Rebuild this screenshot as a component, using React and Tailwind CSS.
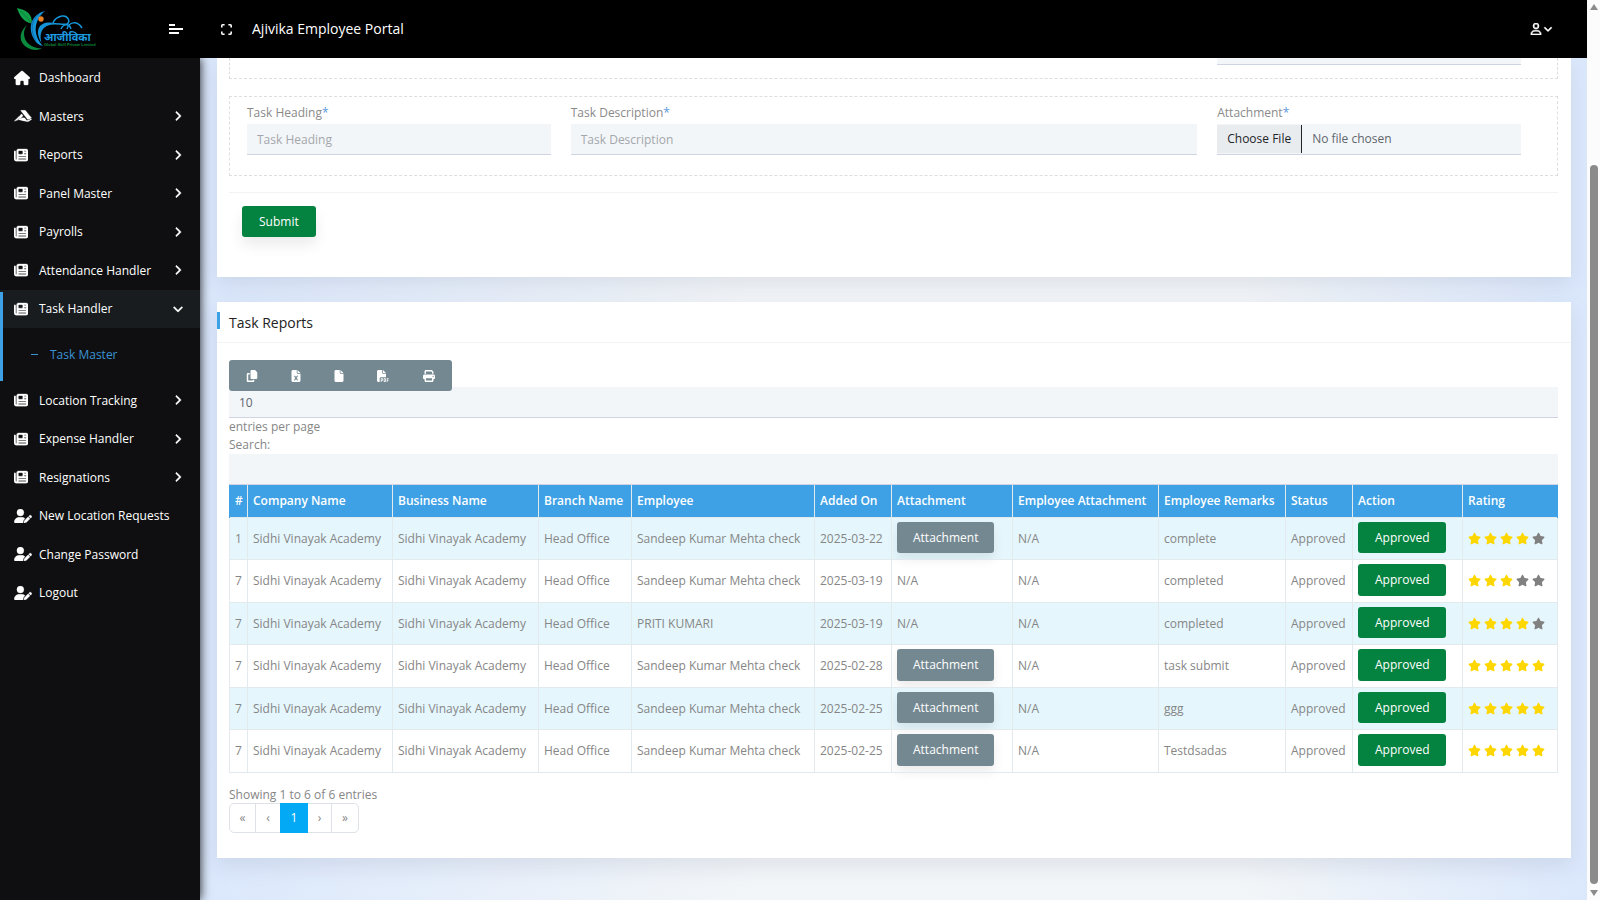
import React from "react";
import {
  FaHouse, FaNewspaper, FaUserPen, FaAngleRight, FaAngleDown, FaRegUser,
  FaCopy, FaFileExcel, FaFile, FaFilePdf, FaPrint, FaStar, FaAccusoft,
} from "react-icons/fa6";

const MENU = [
  { label: "Dashboard", icon: FaHouse, size: "h-4 w-4" },
  { label: "Masters", icon: FaAccusoft, size: "h-3.5 w-[18px]", more: true },
  { label: "Reports", icon: FaNewspaper, size: "size-3.5", more: true },
  { label: "Panel Master", icon: FaNewspaper, size: "size-3.5", more: true },
  { label: "Payrolls", icon: FaNewspaper, size: "size-3.5", more: true },
  { label: "Attendance Handler", icon: FaNewspaper, size: "size-3.5", more: true },
  { label: "Task Handler", icon: FaNewspaper, size: "size-3.5", more: true, open: true, children: ["Task Master"] },
  { label: "Location Tracking", icon: FaNewspaper, size: "size-3.5", more: true },
  { label: "Expense Handler", icon: FaNewspaper, size: "size-3.5", more: true },
  { label: "Resignations", icon: FaNewspaper, size: "size-3.5", more: true },
  { label: "New Location Requests", icon: FaUserPen, size: "h-3.5 w-[18px]" },
  { label: "Change Password", icon: FaUserPen, size: "h-3.5 w-[18px]" },
  { label: "Logout", icon: FaUserPen, size: "h-3.5 w-[18px]" },
];

const ROWS = [
  { n: 1, who: "Sandeep Kumar Mehta check", date: "2025-03-22", file: true, note: "complete", stars: 4 },
  { n: 7, who: "Sandeep Kumar Mehta check", date: "2025-03-19", file: false, note: "completed", stars: 3 },
  { n: 7, who: "PRITI KUMARI", date: "2025-03-19", file: false, note: "completed", stars: 4 },
  { n: 7, who: "Sandeep Kumar Mehta check", date: "2025-02-28", file: true, note: "task submit", stars: 5 },
  { n: 7, who: "Sandeep Kumar Mehta check", date: "2025-02-25", file: true, note: "ggg", stars: 5 },
  { n: 7, who: "Sandeep Kumar Mehta check", date: "2025-02-25", file: true, note: "Testdsadas", stars: 5 },
];

const COLUMNS = [
  ["#", "w-[18px]"],
  ["Company Name", "w-[145px]"],
  ["Business Name", "w-[146px]"],
  ["Branch Name", "w-[93px]"],
  ["Employee", "w-[183px]"],
  ["Added On", "w-[77px]"],
  ["Attachment", "w-[121px]"],
  ["Employee Attachment", "w-[146px]"],
  ["Employee Remarks", "w-[127px]"],
  ["Status", "w-[67px]"],
  ["Action", "w-[110px]"],
  ["Rating", "w-[95px]"],
];

const EXPORTS = [
  ["Copy", FaCopy, "w-[45px]"],
  ["Excel", FaFileExcel, "w-[43px]"],
  ["CSV", FaFile, "w-[43px]"],
  ["PDF", FaFilePdf, "w-[45px]"],
  ["Print", FaPrint, "w-[47px]"],
];

const FIELD = "block h-[31px] w-full border-b border-[#cfd3e2] bg-[#f3f6f9] px-2.5 text-xs text-[#5f666d] outline-none placeholder:text-[#a3a7ab]";

function Logo() {
  return (
    <svg viewBox="0 0 80 44" className="h-11 w-20" role="img" aria-label="Ajivika">
      <path d="M0 1C10 3 16 8 14.500 16.500C7 15 3 10 0 1Z" fill="#12a14b" />
      <path d="M3 4C7 7 11 11 13.500 15.500" stroke="#0b6d33" strokeWidth="0.7" fill="none" />
      <path d="M10 18C1 26 2 36 11 41C15 43.500 21 43.500 25 41.500C17 41 11 38 8.500 33C6 27 7 22 10 18Z" fill="#0b8a3e" />
      <path d="M28 4C15 7 10 20 17 32C19 36 22 38.500 26 39C17 30 15 15 28 4Z" fill="#1594d8" />
      <path d="M22 7C14 13 13 24 19 34" stroke="#0d6fb0" strokeWidth="1" fill="none" />
      <path d="M38 16C24 13 16 21 24.500 36C22 25 25 19 38 16Z" fill="#1594d8" />
      <circle cx="24" cy="12" r="2.7" fill="#e98127" />
      <path d="M30 18C37 15 44 18 50 17C54 15 51 8 45 9C40 10 37 13 36 16M50 22C52 15 60 13 65 21M44 22C46 17 52 16 54 22" stroke="#1594d8" strokeWidth="1.500" fill="none" />
      <text x="27" y="34" fill="#1c9be0" className="text-[11px] font-bold [font-family:'Noto_Sans_Devanagari','Noto_Sans',sans-serif]">आजीविका</text>
      <text x="27" y="39" fill="#0b8a3e" className="text-[4px] font-bold [font-family:'Liberation_Sans',sans-serif]">Global Skill Private Limited</text>
    </svg>
  );
}

function MenuItem({ item }) {
  const Icon = item.icon;
  return (
    <li className={item.open ? "relative" : ""}>
      {item.open && <span className="absolute top-0.5 bottom-0 left-0 w-[3px] bg-[#3ea1e5]" />}
      <a href="#" className={`flex items-center py-[9px] pr-4 pl-3.5 leading-relaxed text-white ${item.open ? "bg-[#181c1f]" : ""}`}>
        <span className="w-[25px] shrink-0"><Icon className={`stroke-current [stroke-width:10px] ${item.size}`} /></span>
        <span className="flex-1 whitespace-nowrap">{item.label}</span>
        {item.more && (item.open
          ? <FaAngleDown className="size-3 stroke-current [stroke-width:16px]" />
          : <FaAngleRight className="size-3 stroke-current [stroke-width:16px]" />)}
      </a>
      {item.children && (
        <ul className="pt-[18px] pb-[17px]">
          {item.children.map((c) => (
            <li key={c}>
              <a href="#" className="flex items-center pl-[31px] leading-[18px] text-[#3b93d3]">
                <span className="mr-3 h-px w-[7px] bg-[#3b93d3]" />
                {c}
              </a>
            </li>
          ))}
        </ul>
      )}
    </li>
  );
}

function Label({ id, children }) {
  return (
    <label htmlFor={id} className="mb-[3px] block leading-4 text-[#8a8a8a]">
      {children}<span className="text-[#5b9bdc]">*</span>
    </label>
  );
}

export default function App() {
  return (
    <div className="flex min-h-screen bg-white text-xs text-[#868686] [font-family:'Open_Sans',sans-serif]">
      <div className="flex min-w-0 flex-1 flex-col">
        <header className="z-20 flex h-[58px] items-center bg-black text-white">
          <a href="#" className="ml-[17px]"><Logo /></a>
          <button type="button" aria-label="Toggle menu" className="ml-[72px]">
            <svg viewBox="0 0 14 10" className="h-2.5 w-3.5" fill="none" stroke="currentColor" strokeWidth="2"><path d="M0 1H6M0 5H14M0 9H10" /></svg>
          </button>
          <button type="button" aria-label="Full screen" className="ml-[38px]">
            <svg viewBox="0 0 11 11" className="size-[11px]" fill="none" stroke="currentColor" strokeWidth="1.600"><path d="M0.8 3.6V1.7Q0.8 0.8 1.7 0.8H3.6M7.4 0.8H9.3Q10.2 0.8 10.2 1.7V3.6M10.2 7.4V9.3Q10.2 10.2 9.3 10.2H7.4M3.6 10.2H1.7Q0.8 10.2 0.8 9.3V7.4" /></svg>
          </button>
          <h1 className="ml-5 flex-1 text-sm font-medium">Ajivika Employee Portal</h1>
          <button type="button" aria-label="Account" className="mr-[34px] flex items-center gap-px">
            <FaRegUser className="size-3 stroke-current [stroke-width:24px]" />
            <FaAngleDown className="size-2.5 stroke-current [stroke-width:24px]" />
          </button>
        </header>

        <div className="flex flex-1">
          <nav className="z-10 w-[200px] shrink-0 bg-[#0f0f11] shadow-[0_0_10px_rgba(0,0,0,0.9)]">
            <ul className="flex flex-col gap-px pt-px">
              {MENU.map((m) => <MenuItem key={m.label} item={m} />)}
            </ul>
          </nav>

          <main className="flex min-w-0 flex-1 flex-col gap-[25px] bg-[linear-gradient(to_right,#dbe8fc,#f3f6f8_40%,#f3f6f8_75%,#dbe8fc)] pr-4 pb-[42px] pl-[17px]">
            <section className="bg-white pr-[13px] pb-10 pl-3 shadow-[0_8px_20px_rgba(100,110,140,0.15)]">
              <form>
                <div className="mb-[17px] flex h-[21px] justify-end border border-t-0 border-dashed border-[#dedede] pr-9">
                  <div className="h-[7px] w-[304px] border-b border-[#cfd3e2] bg-[#f3f6f9]" />
                </div>
                <div className="grid grid-cols-[304fr_627fr_304fr] gap-5 border border-dashed border-[#dedede] pt-2 pr-9 pb-5 pl-[17px]">
                  <div>
                    <Label id="heading">Task Heading</Label>
                    <input id="heading" placeholder="Task Heading" className={FIELD} />
                  </div>
                  <div>
                    <Label id="description">Task Description</Label>
                    <input id="description" placeholder="Task Description" className={FIELD} />
                  </div>
                  <div>
                    <Label id="attachment">Attachment</Label>
                    <input
                      id="attachment"
                      type="file"
                      className="block h-[31px] w-full border-b border-[#cfd3e2] bg-[#f3f6f9] py-px text-xs text-[#5f666d] file:mr-2.5 file:h-7 file:border-r file:border-[#212529] file:bg-[#e9ecef] file:px-2.5 file:text-xs file:text-[#212529]"
                    />
                  </div>
                </div>
                <hr className="mt-4 mb-[13px] border-[#f3f3f3]" />
                <button type="submit" className="ml-[13px] h-[31px] rounded-[3px] bg-[#04823f] px-[17px] text-white shadow-[0_8px_14px_rgba(0,0,0,0.08)]">Submit</button>
              </form>
            </section>

            <section className="bg-white pb-[25px] shadow-[0_8px_20px_rgba(100,110,140,0.15)]">
              <div className="flex h-[41px] items-center border-b border-[#f1f3f5]">
                <span className="-mt-1 h-[17px] w-[3px] bg-[#3ea1e5]" />
                <h2 className="ml-[9px] pt-px text-sm text-[#212121]">Task Reports</h2>
              </div>
              <div className="pt-[17px] pr-[13px] pl-3">
                <div className="relative z-10 inline-flex h-[31px] rounded-[3px] bg-[#748891] align-top text-white">
                  {EXPORTS.map(([name, Icon, w]) => (
                    <button key={name} type="button" aria-label={name} className={`flex items-center justify-center ${w}`}>
                      <Icon className="size-3" />
                    </button>
                  ))}
                </div>
                <select id="perpage" defaultValue="10" className={`${FIELD} -mt-1 appearance-none pt-0.5`}>
                  <option>10</option>
                </select>
                <label htmlFor="perpage" className="block leading-[18px]">entries per page</label>
                <label htmlFor="search" className="block leading-[18px]">Search:</label>
                <input id="search" type="search" className={FIELD} />

                <table className="w-full table-fixed border-collapse leading-relaxed">
                  <colgroup>{COLUMNS.map(([name, w]) => <col key={name} className={w} />)}</colgroup>
                  <thead>
                    <tr className="h-8 bg-[#3ea1e5] text-white">
                      {COLUMNS.map(([name]) => (
                        <th key={name} className="border-x border-[#e3eaee] pl-[5px] text-left font-semibold whitespace-nowrap first:border-l-[#3ea1e5] last:border-r-[#3ea1e5]">{name}</th>
                      ))}
                    </tr>
                  </thead>
                  <tbody className="[&_td]:border [&_td]:border-[#e3eaee] [&_td]:pl-[5px] [&_td]:whitespace-nowrap">
                    {ROWS.map((r, i) => (
                      <tr key={i} className="odd:bg-[#e5f6fd]">
                        <td>{r.n}</td>
                        <td>Sidhi Vinayak Academy</td>
                        <td>Sidhi Vinayak Academy</td>
                        <td>Head Office</td>
                        <td>{r.who}</td>
                        <td>{r.date}</td>
                        <td className={r.file ? "pt-1 pb-1.5" : ""}>
                          {r.file ? (
                            <button type="button" className="block rounded-[3px] bg-[#748891] px-4 py-1.5 text-white shadow-[0_6px_12px_rgba(0,0,0,0.08)]">Attachment</button>
                          ) : "N/A"}
                        </td>
                        <td>N/A</td>
                        <td>{r.note}</td>
                        <td>Approved</td>
                        <td className="pt-1 pb-1.5">
                          <button type="button" className="block rounded-[3px] bg-[#04823f] px-[17px] py-1.5 text-white">Approved</button>
                        </td>
                        <td>
                          <span className="flex gap-[3px]">
                            {[1, 2, 3, 4, 5].map((s) => (
                              <FaStar key={s} className={`size-[13px] ${s <= r.stars ? "text-[#ffd700]" : "text-[#808080]"}`} />
                            ))}
                          </span>
                        </td>
                      </tr>
                    ))}
                  </tbody>
                </table>

                <p className="mt-[13px] leading-[17px]">Showing 1 to 6 of 6 entries</p>
                <nav aria-label="Pages" className="inline-flex h-[30px] rounded-[5px] border border-[#dee2e6] align-top leading-7 text-[#868686]">
                  <a href="#" className="w-[26px] border-r border-[#dee2e6] text-center">«</a>
                  <a href="#" className="w-6 text-center">‹</a>
                  <a href="#" className="-my-px w-7 bg-[#03a9f4] text-center leading-[30px] text-white">1</a>
                  <a href="#" className="w-6 border-r border-[#dee2e6] text-center">›</a>
                  <a href="#" className="w-[26px] text-center">»</a>
                </nav>
              </div>
            </section>
          </main>
        </div>
      </div>

      <div className="flex w-[13px] shrink-0 flex-col items-center bg-[#fcfcfc] py-1" aria-hidden="true">
        <svg viewBox="0 0 8 6" className="h-1.5 w-2" fill="#8b8b8b"><path d="M4 0L8 6H0Z" /></svg>
        <span className="mt-[155px] w-2 flex-1 rounded-full bg-[#8b8b8b]" />
        <svg viewBox="0 0 8 6" className="mt-1.5 h-1.5 w-2" fill="#8b8b8b"><path d="M4 6L8 0H0Z" /></svg>
      </div>
    </div>
  );
}
